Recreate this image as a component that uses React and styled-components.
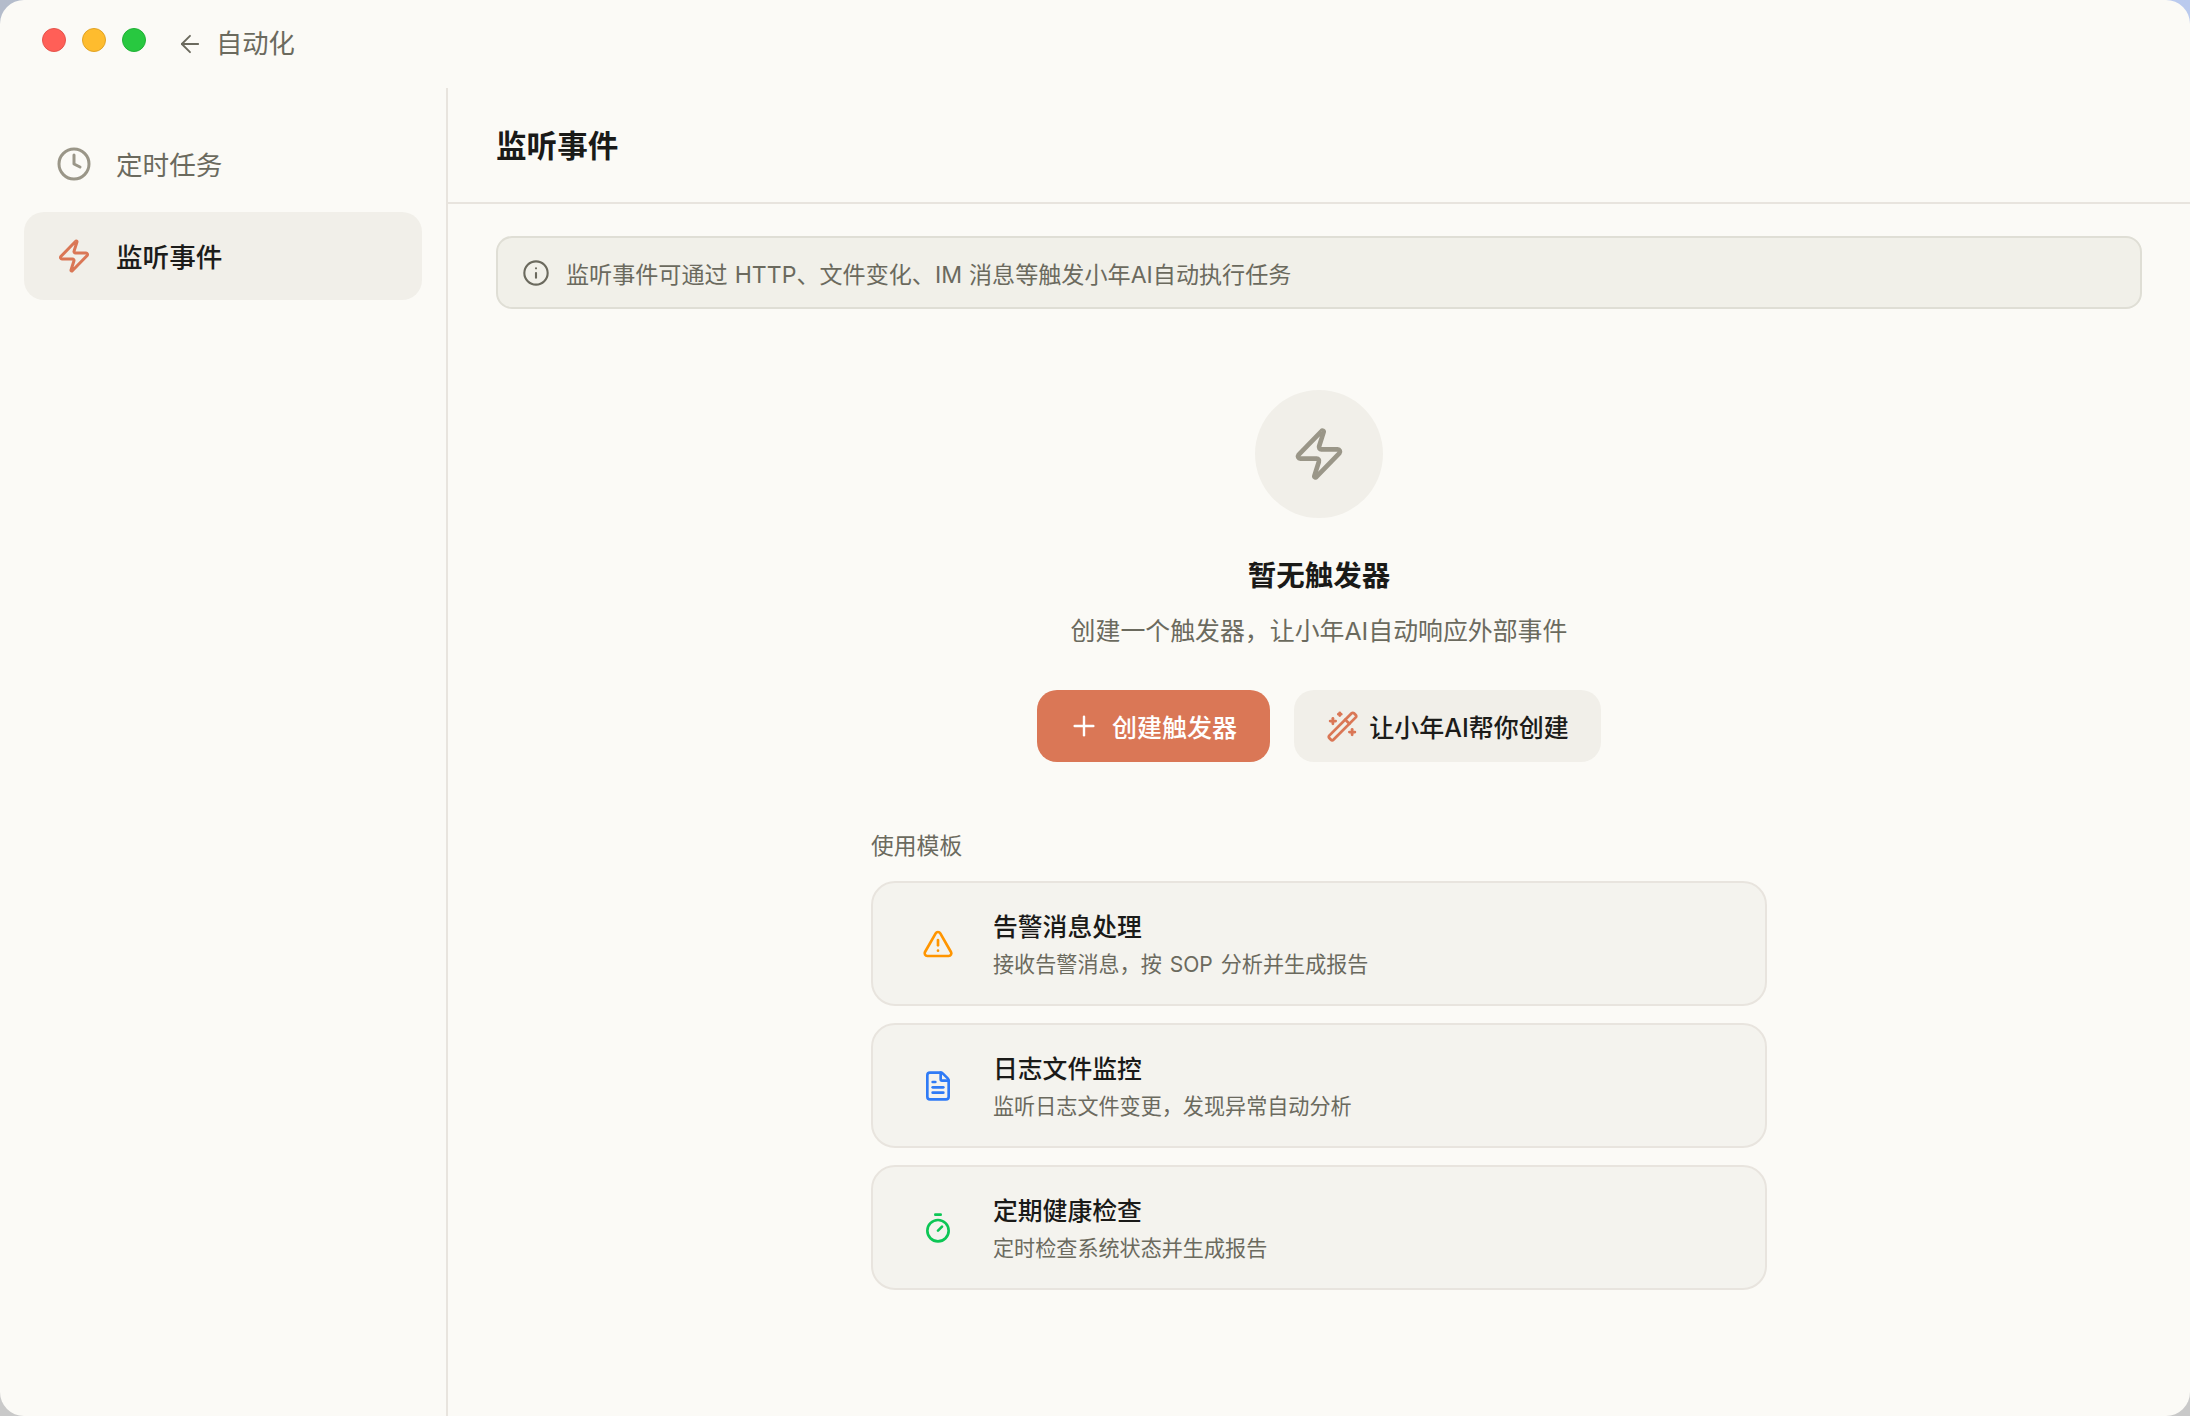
import React from "react";
import styled, { createGlobalStyle } from "styled-components";
import { ArrowLeft, Clock, FileText, Info, Plus, Timer, TriangleAlert, WandSparkles, Zap } from "lucide-react";

const GlobalStyle = createGlobalStyle`
    html, body {
        margin: 0;
        padding: 0;
    }
    body {
        background: linear-gradient(180deg, transparent 50%, #c9c9c9 50%), linear-gradient(90deg, #b4bccb, #bacaee);
        font-family: Inter, "Noto Sans CJK SC", sans-serif;
    }
`;

const Window = styled.div`
    width: 2190px;
    height: 1416px;
    display: flex;
    flex-direction: column;
    background: #fbfaf6;
    border-radius: 24px;
    overflow: hidden;
`;

const TitleBar = styled.div`
    height: 88px;
    flex: none;
    display: flex;
    align-items: center;
    padding-left: 42px;
`;

const Lights = styled.div`
    display: flex;
    gap: 16px;
    margin-top: -8px;
`;

const Light = styled.span`
    width: 24px;
    height: 24px;
    border-radius: 50%;
    box-sizing: border-box;
    background: ${(p) => p.$color};
    border: 1px solid ${(p) => p.$edge};
`;

const BackLink = styled.div`
    display: flex;
    align-items: center;
    gap: 12px;
    margin-left: 30px;
    font-size: 26.3px;
    line-height: 36px;
    color: #6b6a5e;
`;

const Body = styled.div`
    flex: 1;
    display: flex;
    min-height: 0;
`;

const Sidebar = styled.nav`
    width: 448px;
    flex: none;
    box-sizing: border-box;
    border-right: 2px solid #e8e4de;
    padding: 32px 24px 0;
    display: flex;
    flex-direction: column;
    gap: 4px;
`;

const NavItem = styled.div`
    height: 88px;
    width: 398px;
    display: flex;
    align-items: center;
    gap: 24px;
    padding-left: 32px;
    box-sizing: border-box;
    border-radius: 20px;
    font-size: 26.6px;
    font-weight: ${(p) => (p.$active ? 500 : 400)};
    background: ${(p) => (p.$active ? "#f1efe9" : "transparent")};
    color: ${(p) => (p.$active ? "#1c1c1a" : "#6b6a5e")};
    svg {
        color: ${(p) => (p.$active ? "#da7756" : "#9a9688")};
    }
`;

const NavLabel = styled.span`
    padding-bottom: 2px;
`;

const Main = styled.main`
    flex: 1;
    min-width: 0;
    display: flex;
    flex-direction: column;
`;

const Header = styled.header`
    height: 116px;
    flex: none;
    box-sizing: border-box;
    border-bottom: 2px solid #e8e4de;
    display: flex;
    align-items: center;
    padding: 0 0 3px 48px;
    font-size: 30.6px;
    font-weight: 600;
    color: #1a1a18;
`;

const Notice = styled.div`
    margin: 32px 48px 0;
    height: 73px;
    box-sizing: border-box;
    display: flex;
    align-items: center;
    gap: 16px;
    padding-left: 24px;
    background: #f1f0e9;
    border: 2px solid #dfded5;
    border-radius: 16px;
    font-size: 23.1px;
    word-spacing: 0.5px;
    color: #6b6a5e;
`;

const Empty = styled.section`
    display: flex;
    flex-direction: column;
    align-items: center;
`;

const IconCircle = styled.div`
    width: 128px;
    height: 128px;
    margin-top: 81px;
    border-radius: 50%;
    background: #f1efe9;
    color: #9a9688;
    display: flex;
    align-items: center;
    justify-content: center;
`;

const EmptyTitle = styled.h2`
    margin: 38px 0 0;
    font-size: 28.5px;
    line-height: 40px;
    font-weight: 600;
    color: #1a1a18;
`;

const EmptyText = styled.p`
    margin: 17px 0 0;
    font-size: 24.9px;
    line-height: 36px;
    color: #6b6a5e;
`;

const Actions = styled.div`
    display: flex;
    gap: 24px;
    margin-top: 41px;
`;

const Button = styled.button`
    height: 72px;
    width: ${(p) => p.$width}px;
    display: flex;
    align-items: center;
    justify-content: center;
    gap: ${(p) => p.$gap}px;
    padding: 0 ${(p) => (p.$primary ? 2 : 0)}px 0 0;
    border: none;
    border-radius: 20px;
    font-family: inherit;
    font-size: 25px;
    font-weight: 500;
    background: ${(p) => (p.$primary ? "#da7756" : "#f1efe9")};
    color: ${(p) => (p.$primary ? "#fff" : "#1c1c1a")};
    svg {
        color: ${(p) => (p.$primary ? "#fff" : "#da7756")};
    }
`;

const Templates = styled.div`
    width: 896px;
    margin-top: 68px;
    display: flex;
    flex-direction: column;
`;

const TemplatesLabel = styled.div`
    font-size: 22.8px;
    line-height: 32px;
    color: #6b6a5e;
    margin-bottom: 19px;
`;

const CardList = styled.div`
    display: flex;
    flex-direction: column;
    gap: 17px;
`;

const Card = styled.div`
    height: 125px;
    box-sizing: border-box;
    display: flex;
    align-items: center;
    gap: 39px;
    padding-left: 49px;
    background: #f4f3ee;
    border: 2px solid #e8e4de;
    border-radius: 24px;
    svg {
        color: ${(p) => p.$tint};
        flex: none;
    }
`;

const CardCopy = styled.div`
    padding-top: 2px;
`;

const CardTitle = styled.div`
    font-size: 24.8px;
    line-height: 34px;
    font-weight: 500;
    color: #1a1a18;
`;

const CardText = styled.div`
    margin-top: 6px;
    font-size: 21.1px;
    line-height: 30px;
    word-spacing: 2px;
    color: #6b6a5e;
`;

const templates = [
    { title: "告警消息处理", text: "接收告警消息，按 SOP 分析并生成报告", tint: "#ff9500", Icon: TriangleAlert },
    { title: "日志文件监控", text: "监听日志文件变更，发现异常自动分析", tint: "#2f7bf6", Icon: FileText },
    { title: "定期健康检查", text: "定时检查系统状态并生成报告", tint: "#0cc655", Icon: Timer },
];

const App = () => (
    <Window>
        <GlobalStyle />
        <TitleBar>
            <Lights>
                <Light $color="#ff5f57" $edge="#e5534b" />
                <Light $color="#febc2e" $edge="#e1a325" />
                <Light $color="#28c840" $edge="#20b135" />
            </Lights>
            <BackLink>
                <ArrowLeft size={28} strokeWidth={1.6} />
                自动化
            </BackLink>
        </TitleBar>
        <Body>
            <Sidebar>
                <NavItem>
                    <Clock size={36} />
                    <NavLabel>定时任务</NavLabel>
                </NavItem>
                <NavItem $active>
                    <Zap size={36} />
                    <NavLabel>监听事件</NavLabel>
                </NavItem>
            </Sidebar>
            <Main>
                <Header>监听事件</Header>
                <Notice>
                    <Info size={28} strokeWidth={1.8} />
                    监听事件可通过 HTTP、文件变化、IM 消息等触发小年AI自动执行任务
                </Notice>
                <Empty>
                    <IconCircle>
                        <Zap size={56} />
                    </IconCircle>
                    <EmptyTitle>暂无触发器</EmptyTitle>
                    <EmptyText>创建一个触发器，让小年AI自动响应外部事件</EmptyText>
                    <Actions>
                        <Button $primary $width={233} $gap={12}>
                            <Plus size={32} strokeWidth={1.8} />
                            创建触发器
                        </Button>
                        <Button $width={307} $gap={10}>
                            <WandSparkles size={33} strokeWidth={2} />
                            让小年AI帮你创建
                        </Button>
                    </Actions>
                    <Templates>
                        <TemplatesLabel>使用模板</TemplatesLabel>
                        <CardList>
                            {templates.map(({ title, text, tint, Icon }) => (
                                <Card key={title} $tint={tint}>
                                    <Icon size={32} />
                                    <CardCopy>
                                        <CardTitle>{title}</CardTitle>
                                        <CardText>{text}</CardText>
                                    </CardCopy>
                                </Card>
                            ))}
                        </CardList>
                    </Templates>
                </Empty>
            </Main>
        </Body>
    </Window>
);

export default App;
